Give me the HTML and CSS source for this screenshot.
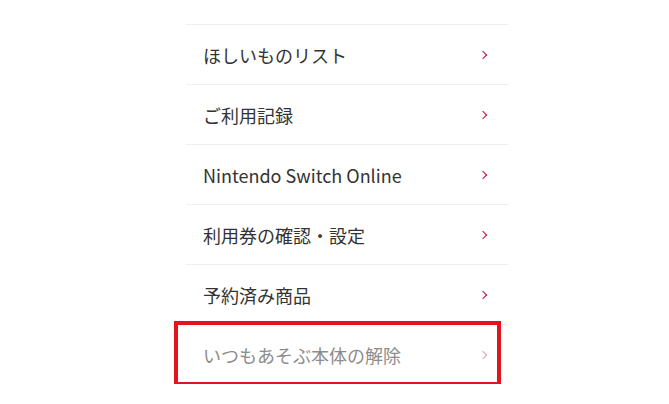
FILE: index.html
```html
<!DOCTYPE html>
<html lang="ja">
<head>
    <meta charset="UTF-8">
    <meta name="viewport" content="width=device-width, initial-scale=1.0">
    <title>メニュー</title>
    <link rel="stylesheet" href="styles.css">
</head>
<body>
    <ul class="menu">
        <li><a href="#">ほしいものリスト<span class="arrow"></span></a></li>
        <li><a href="#">ご利用記録<span class="arrow"></span></a></li>
        <li><a href="#">Nintendo Switch Online<span class="arrow"></span></a></li>
        <li><a href="#">利用券の確認・設定<span class="arrow"></span></a></li>
        <li><a href="#">予約済み商品<span class="arrow"></span></a></li>
        <li class="disabled"><a href="#">いつもあそぶ本体の解除<span class="arrow"></span></a><span class="mark"></span></li>
    </ul>
</body>
</html>
```

FILE: styles.css
```css
body {margin: 0; background: #fff; font-family: "Noto Sans CJK JP", "Noto Sans", sans-serif;}
.menu {list-style: none; margin: 0 0 0 186px; padding: 24px 0 0; width: 322px;}
.menu li {position: relative; border-top: 1px solid #efefef;}
.menu a {display: flex; align-items: center; justify-content: space-between; height: 59px; padding: 0 20px 0 17px; color: #333; font-size: 18px; text-decoration: none;}
.menu .arrow {width: 5px; height: 5px; border-top: 1.6px solid #c60c30; border-right: 1.6px solid #c60c30; transform: rotate(45deg); margin-right: 2px;}
.menu .disabled a {color: #8c8c8c;}
.menu .disabled .arrow {border-color: #e69aa8;}
/* 강조 표시 박스 */
.menu .mark {position: absolute; left: -12px; top: -4px; width: 319px; height: 57px; border: 4px solid #e4141e;}
```
